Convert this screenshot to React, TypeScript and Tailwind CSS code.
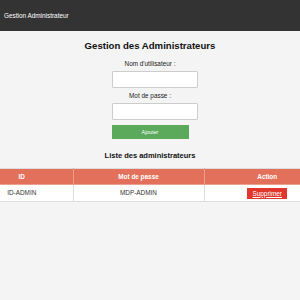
import React from 'react';

const admins = [{ id: 'ID-ADMIN', password: 'MDP-ADMIN' }];

const App: React.FC = () => {
    return (
        <div className="min-h-screen bg-[#f4f4f4] text-[#333] font-['Liberation_Sans',Arial,sans-serif]">
            {/* Barre du haut */}
            <header className="h-[31px] bg-[#333] flex items-center pl-[4px]">
                <span className="text-white text-[6.4px] leading-[8px]">Gestion Administrateur</span>
            </header>

            <main className="flex flex-col items-center">
                <h2 className="mt-[9px] text-[9.6px] leading-[12px] font-bold text-[#111]">Gestion des Administrateurs</h2>

                {/* Formulaire */}
                <form className="w-[77px] mt-[8px] flex flex-col items-start" onSubmit={e => e.preventDefault()}>
                    <label htmlFor="username" className="self-center whitespace-nowrap text-[6.4px] leading-[8px] text-[#222]">
                        Nom d'utilisateur :
                    </label>
                    <input
                        id="username"
                        type="text"
                        className="mt-[3px] w-[86px] h-[17px] shrink-0 bg-white border border-[#ccc] rounded-[1px]"
                    />
                    <label htmlFor="password" className="self-center whitespace-nowrap mt-[4px] text-[6.4px] leading-[8px] text-[#222]">
                        Mot de passe :
                    </label>
                    <input
                        id="password"
                        type="password"
                        className="mt-[3px] w-[86px] h-[17px] shrink-0 bg-white border border-[#ccc] rounded-[1px]"
                    />
                    <button
                        type="submit"
                        className="mt-[5px] w-[77px] h-[14px] bg-[#5ba95b] text-white text-[5.3px] leading-[14px] text-center"
                    >
                        Ajouter
                    </button>
                </form>

                <h3 className="mt-[12px] text-[7.5px] leading-[9px] font-bold text-[#111]">Liste des administrateurs</h3>

                {/* Tableau */}
                <table className="mt-[8px] w-full table-fixed border-collapse text-[6.4px] whitespace-nowrap">
                    <thead>
                        <tr className="bg-[#e2705a] text-white">
                            <th className="w-[73px] h-[16px] p-0 pl-[7px] pr-[36px] border border-[#e9a08f] border-t-[#ddd] border-l-0 font-bold text-center">ID</th>
                            <th className="w-[131px] h-[16px] p-0 border border-[#e9a08f] border-t-[#ddd] font-bold text-center">Mot de passe</th>
                            <th className="h-[16px] p-0 pl-[30px] border border-[#e9a08f] border-t-[#ddd] border-r-0 font-bold text-center">Action</th>
                        </tr>
                    </thead>
                    <tbody>
                        {admins.map(a => (
                            <tr key={a.id} className="bg-white">
                                <td className="h-[17px] p-0 pl-[7px] pr-[36px] border border-[#ddd] border-l-0 text-center">{a.id}</td>
                                <td className="h-[17px] p-0 border border-[#ddd] text-center">{a.password}</td>
                                <td className="h-[17px] p-0 pl-[30px] border border-[#ddd] border-r-0 text-center">
                                    <a
                                        href="#"
                                        className="inline-block align-middle w-[40px] h-[11px] leading-[11px] bg-[#e0362c] text-white underline"
                                    >
                                        Supprimer
                                    </a>
                                </td>
                            </tr>
                        ))}
                    </tbody>
                </table>
            </main>
        </div>
    );
};

export default App;
